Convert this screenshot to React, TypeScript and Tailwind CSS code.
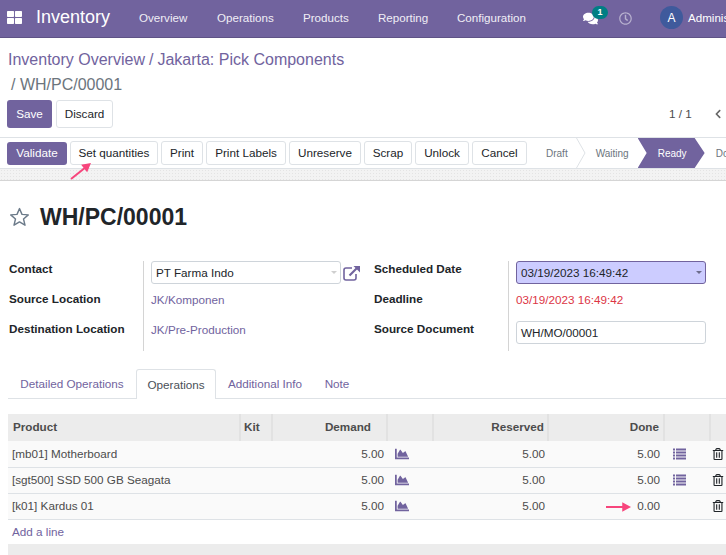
import React from "react";
import { FaThLarge, FaComments, FaRegClock, FaChartArea, FaRegTrashAlt, FaChevronLeft } from "react-icons/fa";

function Arrow({ x1, y1, x2, y2, className }: { x1: number; y1: number; x2: number; y2: number; className: string }) {
  const a = Math.atan2(y2 - y1, x2 - x1);
  const len = 10;
  const w = 0.5;
  const p1 = `${x2 - len * Math.cos(a - w)},${y2 - len * Math.sin(a - w)}`;
  const p2 = `${x2 - len * Math.cos(a + w)},${y2 - len * Math.sin(a + w)}`;
  return (
    <svg className={className} viewBox="0 0 40 30" width="40" height="30">
      <line x1={x1} y1={y1} x2={x2 - 6 * Math.cos(a)} y2={y2 - 6 * Math.sin(a)} stroke="#f7457c" strokeWidth="2" />
      <polygon points={`${x2},${y2} ${p1} ${p2}`} fill="#f7457c" />
    </svg>
  );
}

function ListIcon() {
  return (
    <svg width="13" height="12" viewBox="0 0 13 12" fill="#71639e">
      <rect x="0" y="0.5" width="2" height="2" />
      <rect x="3" y="0.5" width="10" height="2" />
      <rect x="0" y="3.5" width="2" height="2" />
      <rect x="3" y="3.5" width="10" height="2" />
      <rect x="0" y="6.5" width="2" height="2" />
      <rect x="3" y="6.5" width="10" height="2" />
      <rect x="0" y="9.5" width="2" height="2" />
      <rect x="3" y="9.5" width="10" height="2" />
    </svg>
  );
}

function StarIcon() {
  return (
    <svg width="21" height="20" viewBox="0 0 21 20" className="shrink-0">
      <polygon
        points="10.5,1.6 13,7.4 19.3,7.9 14.5,12 16,18.2 10.5,14.9 5,18.2 6.5,12 1.7,7.9 8,7.4"
        fill="none"
        stroke="#6b7a89"
        strokeWidth="1.4"
        strokeLinejoin="round"
      />
    </svg>
  );
}

function ExternalIcon() {
  return (
    <svg width="18" height="16" viewBox="0 0 18 16" className="ml-[2px] mt-[4px] shrink-0" fill="none" stroke="#71639e">
      <path d="M9 3 H3 Q1 3 1 5 V13 Q1 15 3 15 H11 Q13 15 13 13 V9" strokeWidth="1.6" />
      <path d="M6.5 10.5 L14 3" strokeWidth="2.2" />
      <path d="M10.5 1 H17 V7.5 Z" fill="#71639e" stroke="none" />
    </svg>
  );
}

const btn = "h-[24px] rounded-[3px] border border-[#dee2e6] bg-white text-[#212529] flex items-center justify-center shrink-0";

function Row({ name, done, list, arrow }: { name: string; done: string; list?: boolean; arrow?: boolean }) {
  return (
    <tr className="h-[26px] border-b border-[#dee2e6] text-[#4c4c4c] bg-[#fafafa]">
      <td className="pl-[4px]">{name}</td>
      <td></td>
      <td className="text-right pr-[3px]">5.00</td>
      <td className="pl-[8px]"><FaChartArea className="text-[14px] text-[#71639e]" /></td>
      <td className="text-right pr-[3px]">5.00</td>
      <td className="text-right pr-[4px] relative">
        {arrow && <Arrow x1={2} y1={13} x2={27} y2={13} className="absolute left-[56px] top-0" />}
        {done}
      </td>
      <td className="pl-[9px]">{list && <ListIcon />}</td>
      <td className="pl-[2px]"><FaRegTrashAlt className="text-[12px] text-[#212529]" /></td>
    </tr>
  );
}

export default function App() {
  return (
    <div className="w-[726px] h-[555px] overflow-hidden relative bg-white text-[11.7px] text-[#212529] font-['Liberation_Sans',Arial,sans-serif]">
      {/* navbar */}
      <header className="h-[38px] pb-[2px] bg-[#71639e] border-b border-[#5f5386] flex items-center text-white whitespace-nowrap">
        <FaThLarge className="ml-[7px] text-[15px] shrink-0" />
        <span className="ml-[14px] text-[18px] w-[88px] shrink-0">Inventory</span>
        <nav className="flex text-[11.6px] ml-[15px] text-[#f0eef6]">
          <span className="w-[78px]">Overview</span>
          <span className="w-[86px]">Operations</span>
          <span className="w-[75px]">Products</span>
          <span className="w-[79px]">Reporting</span>
          <span className="w-[70px]">Configuration</span>
        </nav>
        <div className="ml-[56px] mt-[2px] relative flex items-center shrink-0">
          <FaComments className="text-[15px]" />
          <span className="absolute left-[9px] top-[-5px] w-[16px] h-[13px] rounded-full bg-[#017e84] text-[9px] font-bold flex items-center justify-center">1</span>
        </div>
        <FaRegClock className="ml-[21px] mt-[2px] text-[13px] text-[#b8b1cf] shrink-0" />
        <span className="ml-[28px] w-[23px] h-[23px] rounded-full bg-[#3f5a9c] flex items-center justify-center text-[12px] shrink-0">A</span>
        <span className="ml-[5px] text-[11.6px]">Administrator</span>
      </header>

      {/* control panel */}
      <div className="pl-[8px] pt-[9px] text-[16px] leading-[25px] text-[#71639e]">
        <div>Inventory Overview<span className="mx-[4px]">/</span>Jakarta: Pick Components</div>
        <div className="text-[#6c757d] pl-[3px]">/ WH/PC/00001</div>
      </div>
      <div className="flex items-center pl-[7px] mt-[3px] h-[28px]">
        <button className="w-[45px] h-[28px] shrink-0 rounded-[3px] bg-[#71639e] text-white">Save</button>
        <button className="ml-[4px] w-[57px] h-[28px] shrink-0 rounded-[3px] border border-[#dee2e6]">Discard</button>
        <span className="ml-[556px] text-[#4c4c4c] whitespace-nowrap">1 / 1</span>
        <FaChevronLeft className="ml-[21px] text-[10px] text-[#666] shrink-0" />
      </div>

      {/* status bar */}
      <div className="mt-[9px] h-[32px] border-y border-[#dee2e6] flex items-center pl-[7px] gap-[3px] whitespace-nowrap relative overflow-hidden">
        <button className="w-[60px] h-[23px] shrink-0 rounded-[3px] bg-[#71639e] text-white">Validate</button>
        <span className={`${btn} w-[88px]`}>Set quantities</span>
        <span className={`${btn} w-[42px]`}>Print</span>
        <span className={`${btn} w-[80px]`}>Print Labels</span>
        <span className={`${btn} w-[72px]`}>Unreserve</span>
        <span className={`${btn} w-[48px]`}>Scrap</span>
        <span className={`${btn} w-[54px]`}>Unlock</span>
        <span className={`${btn} w-[55px]`}>Cancel</span>
        <div className="flex items-center ml-[16px] h-full text-[10px] text-[#6c757d] shrink-0">
          <span>Draft</span>
          <svg className="ml-[8px] shrink-0" width="10" height="30" viewBox="0 0 10 30"><path d="M0.5 0 L9 15 L0.5 30" fill="none" stroke="#dee2e6" /></svg>
          <span className="ml-[10px]">Waiting</span>
          <span className="ml-[9px] w-[67px] h-[30px] shrink-0 bg-[#71639e] text-white flex items-center justify-center pl-[2px] [clip-path:polygon(0_0,57px_0,67px_50%,57px_100%,0_100%,9px_50%)]">Ready</span>
          <span className="ml-[11px]">Done</span>
        </div>
      </div>
      <div className="h-[12px] bg-[#f3f3f3] border-b border-[#d5d5d5] bg-[radial-gradient(#e4e4e4_0.5px,transparent_0.5px)] bg-[length:3px_3px]"></div>

      {/* sheet */}
      <div className="flex items-center pl-[9px] mt-[23px] h-[26px]">
        <StarIcon />
        <h1 className="ml-[10px] text-[23px] font-bold text-[#212529]">WH/PC/00001</h1>
      </div>

      {/* form */}
      <div className="grid grid-cols-[135px_223px_142px_1fr] pl-[8px] mt-[31px] h-[90px]">
        <div className="font-bold flex flex-col pl-[1px]">
          <span className="h-[30px] pt-[1px] leading-[14px]">Contact</span>
          <span className="h-[30px] pt-[1px] leading-[14px]">Source Location</span>
          <span className="h-[30px] pt-[1px] leading-[14px]">Destination Location</span>
        </div>
        <div className="border-l border-[#d4d4d4] pl-[7px] flex flex-col text-[#71639e]">
          <div className="flex items-start h-[30px]">
            <div className="w-[190px] h-[23px] rounded-[3px] border border-[#ced4da] text-[#212529] pl-[4px] flex items-center justify-between pr-[3px]">
              PT Farma Indo
              <span className="w-0 h-0 border-x-[3px] border-x-transparent border-t-[3px] border-t-[#cfcfcf]"></span>
            </div>
            <ExternalIcon />
          </div>
          <span className="h-[30px] pt-[2px] leading-[14px]">JK/Komponen</span>
          <span className="h-[30px] pt-[2px] leading-[14px]">JK/Pre-Production</span>
        </div>
        <div className="font-bold flex flex-col pl-[8px]">
          <span className="h-[30px] pt-[1px] leading-[14px]">Scheduled Date</span>
          <span className="h-[30px] pt-[1px] leading-[14px]">Deadline</span>
          <span className="h-[30px] pt-[1px] leading-[14px]">Source Document</span>
        </div>
        <div className="border-l border-[#d4d4d4] pl-[7px] flex flex-col">
          <div className="h-[30px]">
            <div className="w-[190px] h-[23px] rounded-[3px] border border-[#71639e] bg-[#ccccff] pl-[4px] pr-[3px] flex items-center justify-between">
              03/19/2023 16:49:42
              <span className="w-0 h-0 border-x-[3px] border-x-transparent border-t-[3px] border-t-[#6c6c8c]"></span>
            </div>
          </div>
          <span className="h-[30px] pt-[2px] leading-[14px] text-[#dc3545]">03/19/2023 16:49:42</span>
          <div className="w-[190px] h-[23px] rounded-[3px] border border-[#ced4da] pl-[4px] flex items-center">WH/MO/00001</div>
        </div>
      </div>

      {/* tabs */}
      <div className="ml-[8px] mt-[18px] h-[30px] border-b border-[#dee2e6] flex items-end text-[#71639e]">
        <span className="w-[128px] h-[29px] flex items-center justify-center">Detailed Operations</span>
        <span className="w-[80px] h-[30px] -mb-px bg-white border border-b-0 border-[#dee2e6] rounded-t-[3px] flex items-center justify-center text-[#495057]">Operations</span>
        <span className="w-[98px] h-[29px] flex items-center justify-center">Additional Info</span>
        <span className="w-[46px] h-[29px] flex items-center justify-center">Note</span>
      </div>

      {/* table */}
      <table className="ml-[8px] mt-[15px] w-[740px] table-fixed border-collapse">
        <colgroup>
          <col className="w-[232px]" />
          <col className="w-[32px]" />
          <col className="w-[115px]" />
          <col className="w-[46px]" />
          <col className="w-[115px]" />
          <col className="w-[116px]" />
          <col className="w-[46px]" />
          <col className="w-[38px]" />
        </colgroup>
        <thead>
          <tr className="h-[27px] bg-[#ececec] font-bold text-[#4c4c4c]">
            <th className="text-left pl-[5px] pb-[2px] border-r-2 border-[#e2e2e2]">Product</th>
            <th className="text-left pl-[3px] pb-[2px] border-r-2 border-[#e2e2e2]">Kit</th>
            <th className="text-right pr-[15px] pb-[2px] border-r-2 border-[#e2e2e2]">Demand</th>
            <th className="border-r-2 border-[#e2e2e2]"></th>
            <th className="text-right pr-[3px] pb-[2px] border-r-2 border-[#e2e2e2]">Reserved</th>
            <th className="text-right pr-[4px] pb-[2px] border-r-2 border-[#e2e2e2]">Done</th>
            <th className="border-r-2 border-[#e2e2e2]"></th>
            <th></th>
          </tr>
        </thead>
        <tbody>
          <Row name="[mb01] Motherboard" done="5.00" list />
          <Row name="[sgt500] SSD 500 GB Seagata" done="5.00" list />
          <Row name="[k01] Kardus 01" done="0.00" arrow />
          <tr className="h-[25px]">
            <td colSpan={8} className="pl-[4px] text-[#71639e]">Add a line</td>
          </tr>
          <tr className="h-[11px] bg-[#ececec]">
            <td colSpan={8}></td>
          </tr>
        </tbody>
      </table>

      {/* annotation over the status bar */}
      <Arrow x1={2} y1={24} x2={22} y2={8} className="absolute left-[69px] top-[155px]" />
    </div>
  );
}
